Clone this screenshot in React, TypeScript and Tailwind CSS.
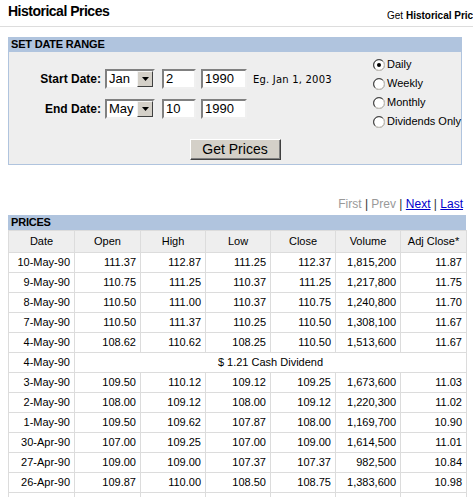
import React from "react";

const ROWS: (string[] | { date: string; note: string })[] = [
  ["10-May-90", "111.37", "112.87", "111.25", "112.37", "1,815,200", "11.87"],
  ["9-May-90", "110.75", "111.25", "110.37", "111.25", "1,217,800", "11.75"],
  ["8-May-90", "110.50", "111.00", "110.37", "110.75", "1,240,800", "11.70"],
  ["7-May-90", "110.50", "111.37", "110.25", "110.50", "1,308,100", "11.67"],
  ["4-May-90", "108.62", "110.62", "108.25", "110.50", "1,513,600", "11.67"],
  { date: "4-May-90", note: "$ 1.21 Cash Dividend" },
  ["3-May-90", "109.50", "110.12", "109.12", "109.25", "1,673,600", "11.03"],
  ["2-May-90", "108.00", "109.12", "108.00", "109.12", "1,220,300", "11.02"],
  ["1-May-90", "109.50", "109.62", "107.87", "108.00", "1,169,700", "10.90"],
  ["30-Apr-90", "107.00", "109.25", "107.00", "109.00", "1,614,500", "11.01"],
  ["27-Apr-90", "109.00", "109.00", "107.37", "107.37", "982,500", "10.84"],
  ["26-Apr-90", "109.87", "110.00", "108.50", "108.75", "1,383,600", "10.98"],
  // next row only shows its borders at the bottom edge
  ["", "", "", "", "", "", ""],
];

const HEADERS = ["Date", "Open", "High", "Low", "Close", "Volume", "Adj Close*"];
const WIDTHS = [66, 66, 65, 65, 65, 65, 66];

const RADIOS = [
  { label: "Daily", checked: true },
  { label: "Weekly", checked: false },
  { label: "Monthly", checked: false },
  { label: "Dividends Only", checked: false },
];

function Radio({ checked }: { checked: boolean }) {
  return (
    <svg width="12" height="12" viewBox="0 0 12 12" className="shrink-0">
      <circle cx="6" cy="6" r="5.5" fill="#ffffff" stroke="#808080" />
      <path d="M2.2 9.8 A5.3 5.3 0 0 1 9.8 2.2" fill="none" stroke="#404040" strokeWidth="1" />
      <path d="M9.8 2.2 A5.3 5.3 0 0 1 2.2 9.8" fill="none" stroke="#d4d0c8" strokeWidth="1" />
      {checked && <circle cx="6" cy="6" r="2" fill="#000000" />}
    </svg>
  );
}

function Select({ value }: { value: string }) {
  return (
    <div className="flex h-[20px] w-[50px] border-2 border-t-[#808080] border-l-[#808080] border-r-[#f0f0f0] border-b-[#f0f0f0] bg-white">
      <span className="flex-1 pl-[2px] text-[13px] leading-[16px] text-black">{value}</span>
      <span className="flex w-[16px] items-center justify-center border border-t-[#f4f4f4] border-l-[#f4f4f4] border-r-[#404040] border-b-[#404040] bg-[#d4d0c8]">
        <svg width="7" height="4" viewBox="0 0 7 4">
          <path d="M0 0h7L3.5 4z" fill="#000" />
        </svg>
      </span>
    </div>
  );
}

function Field({ value, w }: { value: string; w: string }) {
  return (
    <div
      className={`${w} h-[20px] border-2 border-t-[#808080] border-l-[#808080] border-r-[#f0f0f0] border-b-[#f0f0f0] bg-white pl-[2px] text-[13px] leading-[16px] text-black`}
    >
      {value}
    </div>
  );
}

function DateRow({ label, month, day, year, hint }: { label: string; month: string; day: string; year: string; hint?: string }) {
  return (
    <div className="flex h-[20px] items-center">
      <span className="w-[92px] text-right text-[12px] font-bold text-black">{label}</span>
      <span className="ml-[4px]">
        <Select value={month} />
      </span>
      <span className="ml-[7px]">
        <Field value={day} w="w-[34px]" />
      </span>
      <span className="ml-[5px]">
        <Field value={year} w="w-[46px]" />
      </span>
      {hint && (
        <span className="ml-[6px] font-['DejaVu_Sans',sans-serif] text-[10px] tracking-[0.2px] text-black">{hint}</span>
      )}
    </div>
  );
}

export default function App() {
  return (
    <div className="h-[497px] w-[473px] overflow-hidden bg-white font-['Liberation_Sans',Arial,sans-serif] text-black">
      <div className="flex h-[27px] items-start justify-between border-b border-[#dddddd] pl-[8px]">
        <h1 className="pt-[3px] text-[14px] font-bold leading-[17px] tracking-[-0.5px]">Historical Prices</h1>
        <div className="w-[86px] shrink-0 overflow-hidden whitespace-nowrap pt-[10px] text-[10px] leading-[12px]">
          Get <b>Historical Prices</b>
        </div>
      </div>

      <div className="ml-[8px] mt-[10px] w-[454px]">
        <div className="h-[15px] bg-[#b0c4de] pl-[3px] text-[11px] font-bold leading-[15px] tracking-[-0.2px]">SET DATE RANGE</div>
        <div className="border border-t-0 border-[#b0c4de] bg-[#eeeeee] pt-[3px]">
          <div className="flex">
            <div className="flex w-[367px] flex-col gap-[10px] pt-[14px]">
              <DateRow label="Start Date:" month="Jan" day="2" year="1990" hint="Eg. Jan 1, 2003" />
              <DateRow label="End Date:" month="May" day="10" year="1990" />
            </div>
            <div className="flex flex-col">
              {RADIOS.map((r) => (
                <label key={r.label} className="flex h-[19px] items-center gap-[2px] text-[11px]">
                  <Radio checked={r.checked} />
                  <span className="whitespace-nowrap">{r.label}</span>
                </label>
              ))}
            </div>
          </div>
          <div className="mt-[8px] flex justify-center pb-[4px]">
            <button className="h-[21px] w-[91px] border border-t-[#ffffff] border-l-[#ffffff] border-r-[#404040] border-b-[#404040] bg-[#d4d0c8] text-[14px] leading-[17px] text-black shadow-[inset_-1px_-1px_0_#808080]">
              Get Prices
            </button>
          </div>
        </div>
      </div>

      <div className="ml-[8px] w-[458px]">
        <div className="mt-[32px] h-[14px] pr-[3px] text-right text-[12px] leading-[14px]">
          <span className="text-[#999999]">First</span>
          <span className="text-[#333333]"> | </span>
          <span className="text-[#999999]">Prev</span>
          <span className="text-[#333333]"> | </span>
          <a className="text-[#0000cc] underline">Next</a>
          <span className="text-[#333333]"> | </span>
          <a className="text-[#0000cc] underline">Last</a>
        </div>
        <div className="mt-[4px] h-[15px] bg-[#b0c4de] pl-[3px] text-[11px] font-bold leading-[15px] tracking-[-0.2px]">PRICES</div>
        <table className="w-[458px] table-fixed border-collapse text-[11px]">
          <colgroup>
            {WIDTHS.map((w, i) => (
              <col key={i} style={{ width: w }} />
            ))}
          </colgroup>
          <thead>
            <tr className="h-[22px] bg-[#eeeeee]">
              {HEADERS.map((h) => (
                <th key={h} className="border border-[#dcdcdc] text-center font-normal">
                  {h}
                </th>
              ))}
            </tr>
          </thead>
          <tbody>
            {ROWS.map((r, i) =>
              Array.isArray(r) ? (
                <tr key={i} className="h-[20px]">
                  {r.map((c, j) => (
                    <td key={j} className="border border-[#dcdcdc] pr-[4px] text-right">
                      {c}
                    </td>
                  ))}
                </tr>
              ) : (
                <tr key={i} className="h-[20px]">
                  <td className="border border-[#dcdcdc] pr-[4px] text-right">{r.date}</td>
                  <td colSpan={6} className="border border-[#dcdcdc] text-center">
                    {r.note}
                  </td>
                </tr>
              )
            )}
          </tbody>
        </table>
      </div>
    </div>
  );
}
